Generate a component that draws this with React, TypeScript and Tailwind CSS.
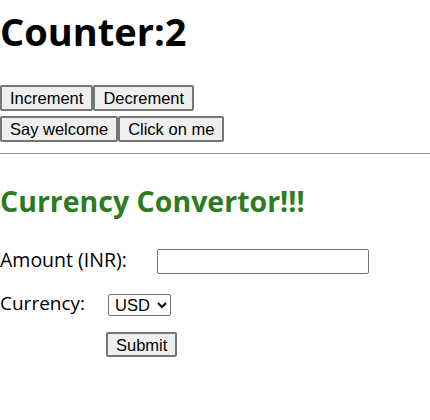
export default function App() {
  const seg = { fontFamily: '"Open Sans", "Noto Sans", sans-serif' };
  const arial = { fontFamily: '"Liberation Sans", Arial, sans-serif' };
  const btn =
    "h-[26px] border-2 border-[#767676] rounded-[2px] bg-[#efefef] px-[8px] text-[16.5px] leading-[20px] text-black";
  return (
    <div className="w-[430px] h-[420px] bg-white text-black" style={seg}>
      <h1 className="text-[38px] font-bold leading-[52px] pt-[5px] mb-[28px]">Counter:2</h1>
      <div className="flex flex-col gap-[5px]" style={arial}>
        <div className="flex">
          <button className={btn}>Increment</button>
          <button className={btn}>Decrement</button>
        </div>
        <div className="flex">
          <button className={btn}>Say welcome</button>
          <button className={btn}>Click on me</button>
        </div>
      </div>
      <hr className="mt-[11px] border-t border-[#9a9a9a]" />
      <h2 className="text-[28.5px] font-bold text-[#2e7b1f] mt-[27px] leading-[40px]">
        Currency Convertor!!!
      </h2>
      <div className="mt-[28px] flex items-start text-[19.5px]">
        <span className="w-[157px] leading-[21px]">Amount (INR):</span>
        <input
          className="w-[212px] h-[25px] border border-[#767676] rounded-[2px]"
          type="text"
        />
      </div>
      <div className="mt-[20px] flex items-start text-[19px]">
        <span className="w-[108px] leading-[19px]">Currency:</span>
        <select
          className="w-[63px] h-[22px] border border-[#767676] rounded-[2px] text-[16.5px] px-[2px]"
          style={arial}
        >
          <option>USD</option>
        </select>
      </div>
      <div className="mt-[16px] pl-[106px]" style={arial}>
        <button className={btn.replace("h-[26px]", "h-[25px]")}>Submit</button>
      </div>
    </div>
  );
}
